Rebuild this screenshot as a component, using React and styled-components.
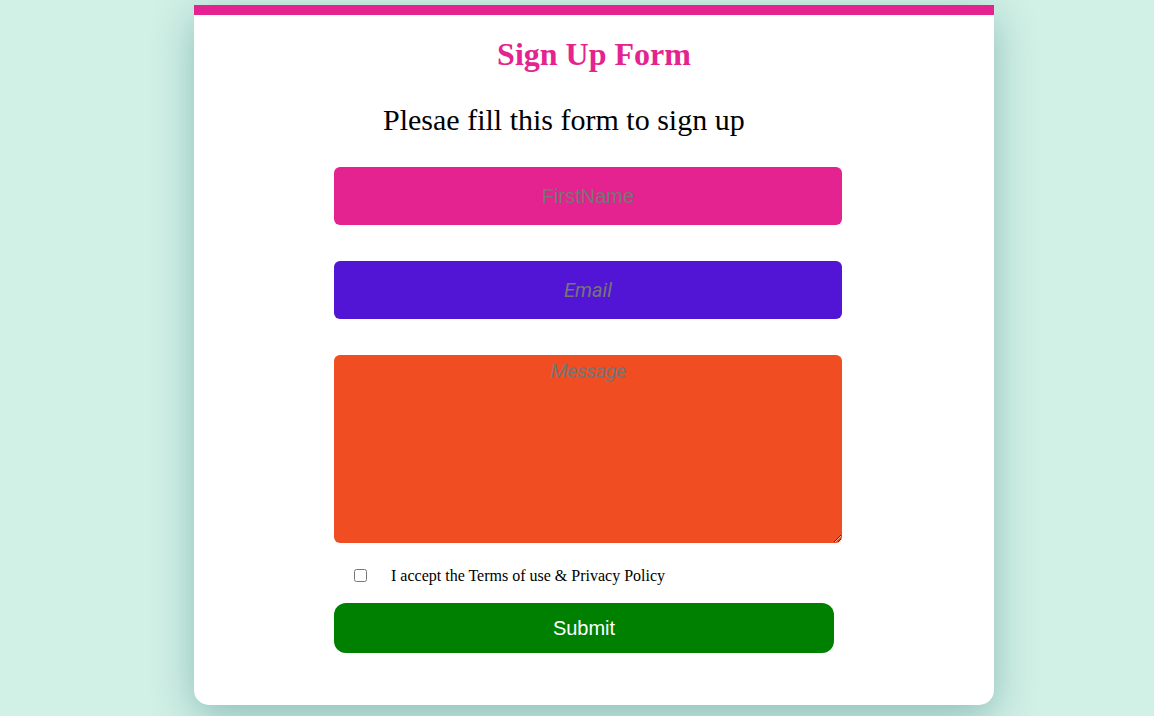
import React from "react";
import styled, { createGlobalStyle } from "styled-components";

const GlobalStyle = createGlobalStyle`
  html, body {
    margin: 0;
    padding: 0;
    background: #d1f0e6;
  }
  body {
    font-family: "Liberation Serif", "Times New Roman", serif;
  }
`;

const Page = styled.div`
  min-height: 716px;
  padding: 5px 0 0 34px;
  box-sizing: border-box;
  display: flex;
  justify-content: center;
  align-items: flex-start;
`;

const Card = styled.div`
  width: 800px;
  height: 700px;
  box-sizing: border-box;
  background: #ffffff;
  border-top: 10px solid #e52390;
  border-radius: 0 0 15px 15px;
  box-shadow: 0 12px 40px rgba(60, 130, 130, 0.45);
  display: flex;
  flex-direction: column;
  align-items: center;
`;

const Title = styled.h1`
  margin: 21px 0 0 0;
  font-family: "Liberation Serif", "Times New Roman", serif;
  font-size: 32px;
  font-weight: bold;
  color: #e52390;
  line-height: normal;
  text-align: center;
`;

const Form = styled.form`
  width: 508px;
  margin-left: -12px;
  display: flex;
  flex-direction: column;
`;

const Subtitle = styled.p`
  margin: 30px 0 0 49px;
  font-family: "Liberation Serif", "Times New Roman", serif;
  font-size: 30px;
  line-height: normal;
  color: #000;
`;

const Field = styled.input`
  display: block;
  box-sizing: border-box;
  width: 100%;
  height: 58px;
  margin-top: ${(p) => p.$mt}px;
  border: none;
  border-radius: 6px;
  background: ${(p) => p.$bg};
  text-align: center;
  font-family: ${(p) => (p.$italic ? '"Roboto", sans-serif' : '"Liberation Sans", Arial, sans-serif')};
  font-style: ${(p) => (p.$italic ? "italic" : "normal")};
  font-size: 20px;
  color: #333;
  outline: none;
  &::placeholder {
    color: #757575;
    opacity: 1;
  }
`;

const Message = styled.textarea`
  display: block;
  box-sizing: border-box;
  width: 100%;
  height: 188px;
  margin-top: 36px;
  padding: 4px 8px;
  border: none;
  border-radius: 6px;
  background: #f14d22;
  text-align: center;
  font-family: "Roboto", sans-serif;
  font-style: italic;
  font-size: 20px;
  letter-spacing: -0.6px;
  color: #333;
  outline: none;
  &::placeholder {
    color: #757575;
    opacity: 1;
  }
`;

const TermsRow = styled.label`
  display: flex;
  align-items: center;
  margin-top: 23px;
  padding-left: 16px;
  font-family: "Liberation Serif", "Times New Roman", serif;
  font-size: 16px;
  line-height: 19px;
  color: #000;
`;

const Check = styled.input`
  margin: 3px 24px 3px 4px;
  width: 13px;
  height: 13px;
`;

const Submit = styled.button`
  width: 500px;
  height: 50px;
  margin-top: 18px;
  border: none;
  border-radius: 12px;
  background: #008000;
  color: #ffffff;
  font-family: "Liberation Sans", Arial, sans-serif;
  font-size: 20px;
  cursor: pointer;
`;

export default function App() {
  return (
    <>
      <GlobalStyle />
      <Page>
        <Card>
          <Title>Sign Up Form</Title>
          <Form onSubmit={(e) => e.preventDefault()}>
            <Subtitle>Plesae fill this form to sign up</Subtitle>
            <Field $mt={30} $bg="#e52390" type="text" placeholder="FirstName" />
            <Field $mt={36} $bg="#5215d6" $italic type="email" placeholder="Email" />
            <Message placeholder="Message" />
            <TermsRow>
              <Check type="checkbox" />
              I accept the Terms of use &amp; Privacy Policy
            </TermsRow>
            <Submit type="submit">Submit</Submit>
          </Form>
        </Card>
      </Page>
    </>
  );
}
